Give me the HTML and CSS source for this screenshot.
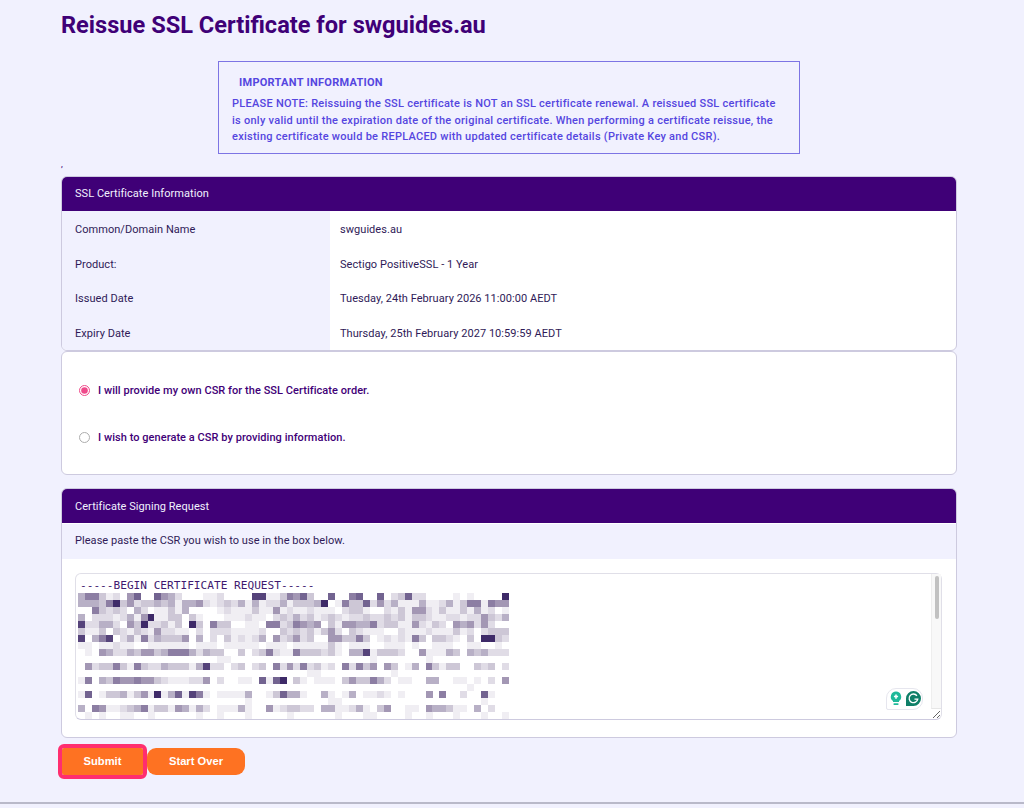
FILE: index.html
```html
<!DOCTYPE html>
<html lang="en">
<head>
    <meta charset="UTF-8">
    <title>Reissue SSL Certificate</title>
    <link rel="stylesheet" href="styles.css">
</head>
<body>
    <div class="page">
        <h1>Reissue SSL Certificate for swguides.au</h1>
        <div class="notice">
            <h4>IMPORTANT INFORMATION</h4>
            <p>PLEASE NOTE: Reissuing the SSL certificate is NOT an SSL certificate renewal. A reissued SSL certificate is only valid until the expiration date of the original certificate. When performing a certificate reissue, the existing certificate would be REPLACED with updated certificate details (Private Key and CSR).</p>
        </div>
        <div class="stray">,</div>
        <form>
            <div class="panel">
                <div class="panel-head">SSL Certificate Information</div>
                <div class="info-row"><div class="info-key">Common/Domain Name</div><div class="info-val">swguides.au</div></div>
                <div class="info-row"><div class="info-key">Product:</div><div class="info-val">Sectigo PositiveSSL - 1 Year</div></div>
                <div class="info-row"><div class="info-key">Issued Date</div><div class="info-val">Tuesday, 24th February 2026 11:00:00 AEDT</div></div>
                <div class="info-row"><div class="info-key">Expiry Date</div><div class="info-val">Thursday, 25th February 2027 10:59:59 AEDT</div></div>
            </div>
            <div class="panel choices">
                <label class="choice"><input type="radio" name="csr" checked><span>I will provide my own CSR for the SSL Certificate order.</span></label>
                <label class="choice"><input type="radio" name="csr"><span>I wish to generate a CSR by providing information.</span></label>
            </div>
            <div class="panel csr-panel">
                <div class="panel-head">Certificate Signing Request</div>
                <div class="csr-hint">Please paste the CSR you wish to use in the box below.</div>
                <div class="csr-body">
                    <div class="csr-wrap">
                        <textarea id="csr" spellcheck="false"></textarea>
                        <svg id="mosaic" class="mosaic" width="434" height="126" shape-rendering="crispEdges"></svg>
                        <div class="scroll-track"><div class="scroll-thumb"></div></div>
                        <div class="grammarly">
                            <svg width="14" height="17" viewBox="0 0 16 18">
                                <path d="M8 1a6 6 0 0 0-3.4 10.9V13h6.8v-1.1A6 6 0 0 0 8 1z" fill="#1fb99a"/>
                                <rect x="5" y="14.4" width="6" height="2" rx="1" fill="#1fb99a"/>
                                <path d="M8 4.4v4.8M5.6 6.8h4.8" stroke="#fff" stroke-width="1.8" fill="none"/>
                            </svg>
                            <svg width="15" height="15" viewBox="0 0 17 17">
                                <path d="M8.5 0a8.5 8.5 0 1 1 0 17H0V8.5A8.5 8.5 0 0 1 8.5 0z" fill="#0f7f68"/>
                                <path d="M12.4 5.4A4.9 4.9 0 1 0 13.3 9.2H9.6" stroke="#fff" stroke-width="1.5" fill="none"/>
                            </svg>
                        </div>
                    </div>
                </div>
            </div>
            <div class="actions">
                <button type="button" class="btn btn-marked">Submit</button>
                <button type="button" class="btn btn-over">Start Over</button>
            </div>
        </form>
    </div>
    <div class="foot"></div>
    <script src="script.js"></script>
</body>
</html>
```
FILE: styles.css
```css
html,body{margin:0;padding:0;}
body{
    background:#f1f1fe;
    font-family:"Roboto","Liberation Sans",sans-serif;
    color:#2f1a57;
    font-size:11px;
    letter-spacing:0.05px;
    height:808px;
    overflow:hidden;
}
.page{padding:0 67px 0 61px;}
h1{
    margin:0;
    padding-top:11px;
    font-size:23.6px;
    line-height:28px;
    font-weight:700;
    letter-spacing:0;
    color:#3f0077;
}
.notice{
    box-sizing:border-box;
    width:582px;
    height:93px;
    margin:22px 0 0 157px;
    padding:14px 14px 0 13px;
    border:1px solid #7d74e4;
    color:#5546e0;
    font-weight:500;
}
.notice h4{
    margin:0 0 6px 7px;
    font-size:11px;
    line-height:14px;
    font-weight:700;
    letter-spacing:0.27px;
}
.notice p{margin:0;line-height:16.67px;letter-spacing:0.26px;}
.stray{height:22px;font-size:9px;line-height:20px;color:#3f0077;}
.panel{
    background:#fff;
    border:1px solid #cdcadf;
    border-radius:6px;
    overflow:hidden;
}
.panel-head{
    height:34px;
    background:#3f0077;
    color:#f1f1fe;
    line-height:33px;
    padding-left:13px;
}
.csr-panel .panel-head{line-height:35px;}
.info-row{display:flex;height:34.7px;line-height:37px;}
.info-key{width:255px;padding-left:13px;background:#f1f1fe;}
.info-val{padding-left:10px;}
.choices{
    box-sizing:border-box;
    height:124px;
    padding-top:15px;
    margin-bottom:13px;
}
.choice{
    display:flex;
    align-items:center;
    height:47px;
    padding-left:17px;
    color:#3f0077;
    font-weight:500;
}
.choice input{
    width:11px;
    height:11px;
    margin:0 8px 0 0;
    accent-color:#ef4a8a;
}
.choice input:not(:checked){opacity:0.6;}
.csr-panel{height:250px;box-sizing:border-box;}
.csr-hint{
    height:35px;
    margin-top:1px;
    background:#f1f1fe;
    line-height:33px;
    padding-left:13px;
}
.csr-body{padding:14px 14px 0 13px;}
.csr-wrap{position:relative;height:147px;}
textarea{
    display:block;
    box-sizing:border-box;
    width:100%;
    height:100%;
    padding:5px 4px;
    border:1px solid #e0dfe8;
    border-bottom-color:#cdcadf;
    border-radius:6px;
    background:#fff;
    color:#3f1a70;
    font-family:"DejaVu Sans Mono","Liberation Mono",monospace;
    font-size:11.13px;
    line-height:14px;
    letter-spacing:0;
    overflow:hidden;
    outline:none;
}
.mosaic{
    position:absolute;
    left:3px;
    top:20px;
    filter:blur(0.5px);
}
.scroll-track{
    position:absolute;
    top:1px;
    right:1px;
    bottom:11px;
    box-sizing:border-box;
    width:10px;
    padding:2px 2px 0 3px;
    background:#f8f8f8;
    border-left:1px solid #eeeeee;
    border-bottom:1px solid #e6e6e6;
}
.scroll-thumb{height:43px;background:#c1c1c1;border-radius:3px;}
.grammarly{
    position:absolute;
    right:19px;
    bottom:10px;
    display:flex;
    align-items:center;
    gap:3px;
    height:20px;
    padding:0 1px 0 2px;
    background:#fff;
    border:1px solid #e6e6ee;
    border-radius:10px 10px 10px 2px;
}
.actions{display:flex;margin-top:10px;padding-left:1px;}
.btn{
    height:27px;
    padding:0;
    border:0;
    color:#fff;
    background:#fe7222;
    font-family:"Liberation Sans",Arial,sans-serif;
    font-size:11.2px;
    font-weight:700;
    letter-spacing:0;
}
.btn-marked{
    width:81px;
    border-radius:2px;
    outline:4px solid #ff2e6f;
    outline-offset:0;
}
.btn-over{width:98px;margin-left:4px;border-radius:9px;}
.foot{
    margin-top:27px;
    border-top:2px solid #b9b9c9;
}
```
FILE: script.js
```js
// the csr body is blurred out in the picture, so draw it as shaded blocks
const rows = [
"46631205700754200011200008811365730070067007023722000010100009007",
"444369352334341445212324141224133349016337252411141124136616550",
"00632320420113140000121113115121121110233100213155213113141201240",
"40222124159113303100011121102324231232122322323133211221225324110",
"822442053922313093063300110662365450315544623311521320545252000",
"31130321321522110202221111200323231352032111002111211131202333200",
"80468024162433350402031212405235230055336301212163033210309932100",
"11011211001111110111011111011101111131011100111010011100110010000",
"01054224355346664243300302362116333231044813332005111430434222710",
"00000000000000000000110000000000000000000010000000100000000000100",
"05233631632243331482202302306252623120626350530140631330032302300",
"00000000000000000000000000000000011000000000010000000000000000100",
"16043655655321112250200110717903101110353364201100440011010205510",
"00000000000000000000000000000000000000000000000000000000100000000",
"17013341351914718610111140013744100410140112101000506002007100000",
"00000000000000000000000010000000000011000000000000000000001000000",
"40651123461331541420111410051233220441124103500110544311040200400",
"01010011001000000100100010000010000001000110000100100010001001000"
];
const shades = ["#ffffff","#f0eef3","#e0dce6","#cdc7d6","#b8b0c6","#a397b4","#8c7ea3","#726390","#55437a","#3e2a68"];
const mosaic = document.getElementById("mosaic");
rows.forEach(function(row,y){
  for(let x=0;x<62;x++){
    const level = Number(row[x]||0);
    if(level===0) continue;
    const r = document.createElementNS("http://www.w3.org/2000/svg","rect");
    r.setAttribute("x",x*6.95);
    r.setAttribute("y",y*7);
    r.setAttribute("width",7);
    r.setAttribute("height",7);
    r.setAttribute("fill",shades[level]);
    mosaic.appendChild(r);
  }
});
document.getElementById("csr").value = "-----BEGIN CERTIFICATE REQUEST-----" + "\n".repeat(32) + "-----END CERTIFICATE REQUEST-----";
```
